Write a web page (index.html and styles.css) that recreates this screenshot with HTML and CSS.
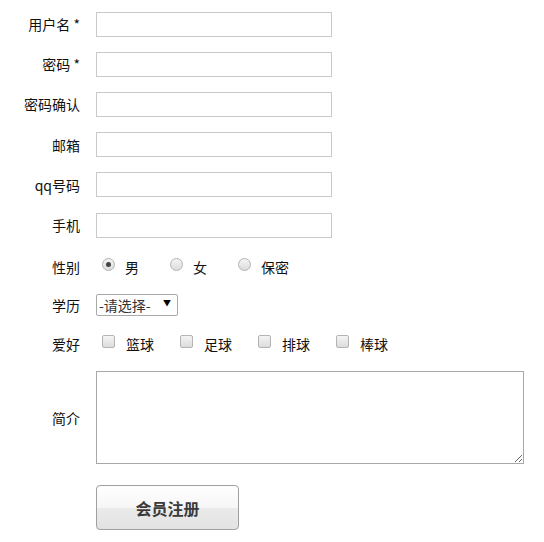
FILE: index.html
```html
<!DOCTYPE html>
<html lang="zh-CN">
<head>
    <meta charset="UTF-8">
    <title>会员注册</title>
    <link rel="stylesheet" href="styles.css">
</head>
<body>
    <form class="reg-form">
        <div class="row">
            <label for="username">用户名&nbsp;*</label>
            <input type="text" id="username" class="text-input">
        </div>
        <div class="row">
            <label for="pwd">密码&nbsp;*</label>
            <input type="password" id="pwd" class="text-input">
        </div>
        <div class="row">
            <label for="pwd2">密码确认</label>
            <input type="password" id="pwd2" class="text-input">
        </div>
        <div class="row">
            <label for="email">邮箱</label>
            <input type="text" id="email" class="text-input">
        </div>
        <div class="row">
            <label for="qq">qq号码</label>
            <input type="text" id="qq" class="text-input">
        </div>
        <div class="row">
            <label for="phone">手机</label>
            <input type="text" id="phone" class="text-input">
        </div>

        <!-- 性别 -->
        <div class="row row-radio">
            <label>性别</label>
            <div class="options">
                <span class="opt"><input type="radio" name="sex" checked><span>男</span></span>
                <span class="opt"><input type="radio" name="sex"><span>女</span></span>
                <span class="opt"><input type="radio" name="sex"><span>保密</span></span>
            </div>
        </div>

        <div class="row row-select">
            <label for="edu">学历</label>
            <div>
                <span class="select-wrap">
                    <select id="edu">
                        <option>-请选择-</option>
                        <option>本科</option>
                        <option>硕士</option>
                    </select>
                    <span class="arrow">▼</span>
                </span>
            </div>
        </div>

        <!-- 爱好 -->
        <div class="row row-check">
            <label>爱好</label>
            <div class="options">
                <span class="opt hobby"><input type="checkbox"><span>篮球</span></span>
                <span class="opt hobby"><input type="checkbox"><span>足球</span></span>
                <span class="opt hobby"><input type="checkbox"><span>排球</span></span>
                <span class="opt hobby"><input type="checkbox"><span>棒球</span></span>
            </div>
        </div>

        <div class="row row-intro">
            <label for="intro">简介</label>
            <textarea id="intro"></textarea>
        </div>

        <div class="row row-btn">
            <span></span>
            <div><button type="button" class="submit">会员注册</button></div>
        </div>
    </form>
</body>
</html>
```

FILE: styles.css
```css
body {
    margin: 0;
    font-family: "Noto Sans CJK SC", "Liberation Sans", sans-serif;
    font-size: 14px;
    color: #111;
    background: #ffffff;
}

.reg-form {
    padding-top: 4px;
    width: 530px;
}

.row {
    display: grid;
    grid-template-columns: 80px 1fr;
    column-gap: 16px;
    align-items: center;
    height: 40.2px;
}

.row label {
    text-align: right;
    line-height: 20px;
}

.text-input {
    width: 236px;
    height: 25px;
    box-sizing: border-box;
    border: 1px solid #c9c9c9;
    padding: 2px 4px;
    font-family: inherit;
    margin: 0;
}

/* 单选和复选 */
.row-radio {
    height: 43px;
}

.options {
    display: flex;
    align-items: center;
}

.opt {
    display: flex;
    align-items: center;
    margin-right: 25px;
    line-height: 20px;
}

.opt input {
    appearance: none;
    margin: 0 0 0 6px;
    width: 13px;
    height: 13px;
    border: 1px solid #b4b4b4;
    background: linear-gradient(#f4f4f4, #dcdcdc);
    box-sizing: border-box;
    position: relative;
    top: -2px;
}

.opt input[type="radio"] {
    border-radius: 50%;
    margin-right: 10px;
}

.opt input[type="radio"]:checked::after {
    content: "";
    position: absolute;
    left: 3px;
    top: 3px;
    width: 5px;
    height: 5px;
    border-radius: 50%;
    background: #444;
}

.opt.hobby {
    margin-right: 20px;
}

.opt input[type="checkbox"] {
    border-radius: 2px;
    margin-right: 11px;
    top: -3px;
}

.row-select {
    height: 33px;
}

.select-wrap {
    position: relative;
    display: inline-block;
}

.select-wrap select {
    appearance: none;
    width: 82px;
    height: 22px;
    border: 1px solid #a9a9a9;
    border-radius: 2px;
    background: #fff;
    font-family: inherit;
    font-size: 14px;
    color: #333;
    padding: 0 0 0 2px;
    margin: 0;
    display: block;
}

.select-wrap .arrow {
    position: absolute;
    right: 7px;
    top: 4px;
    font-size: 8px;
    line-height: 10px;
    color: #000;
    pointer-events: none;
}

.row-check {
    height: 46px;
}

.row-intro {
    height: auto;
    margin-top: 4px;
}

.row-intro textarea {
    width: 428px;
    height: 93px;
    box-sizing: border-box;
    border: 1px solid #a8a8a8;
    margin: 0;
    resize: both;
}

.row-btn {
    height: auto;
    margin-top: 21px;
}

.submit {
    width: 143px;
    height: 45px;
    border: 1px solid #a0a0a0;
    border-radius: 4px;
    background: linear-gradient(#ffffff 0%, #f6f6f6 50%, #ebebeb 51%, #e2e2e2 100%);
    font-family: inherit;
    font-size: 16px;
    font-weight: bold;
    color: #3a3a3a;
    cursor: pointer;
}
```
